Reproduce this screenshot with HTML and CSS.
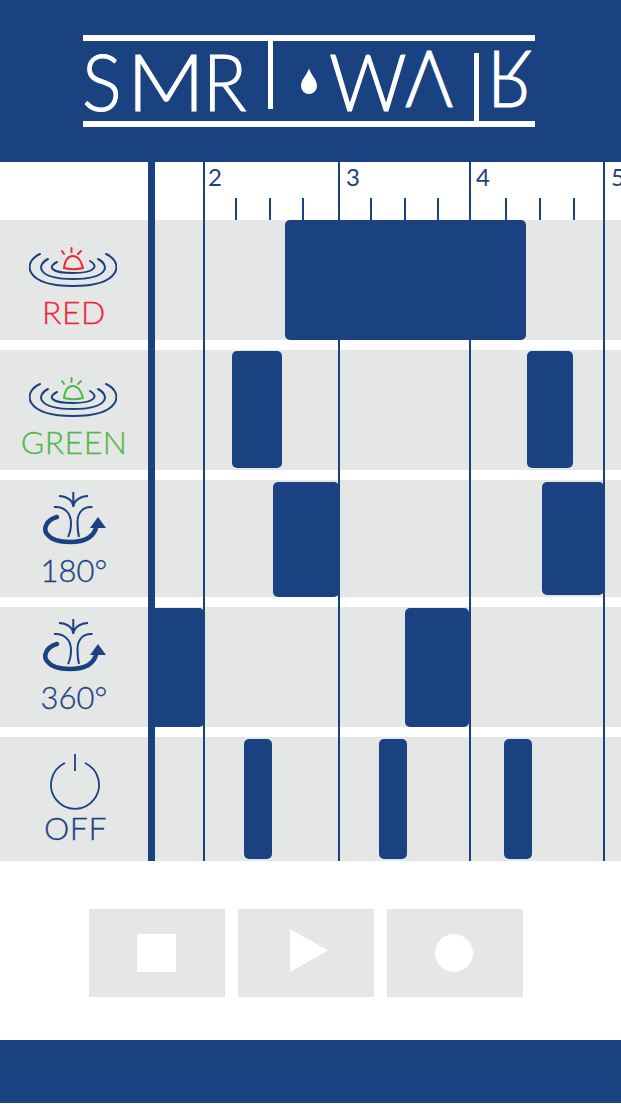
FILE: index.html
```html
<!DOCTYPE html>
<html lang="en">
<head>
  <meta charset="UTF-8" />
  <meta name="viewport" content="width=device-width, initial-scale=1.0"/>
  <title>Smart Water</title>
  <link rel="stylesheet" href="styles.css">
</head>
<body>
  <header class="top-bar">
    <div class="logo">
      <span class="logo-letter letter-s">S</span>
      <span class="logo-letter letter-m">M</span>
      <span class="logo-letter letter-r">R</span>
      <span class="logo-stem stem-top"></span>
      <svg class="logo-drop" viewBox="0 0 16 26"><path d="M8 0C9 6 16 11 16 18A8 8 0 0 1 0 18C0 11 7 6 8 0Z"/></svg>
      <span class="logo-letter letter-w">W</span>
      <span class="logo-letter letter-v">V</span>
      <span class="logo-stem stem-bottom"></span>
      <span class="logo-letter letter-rr">R</span>
    </div>
  </header>

  <main class="chart">
    <div class="ruler">
      <span class="ruler-num" style="left: 208px">2</span>
      <span class="ruler-num" style="left: 346px">3</span>
      <span class="ruler-num" style="left: 476px">4</span>
      <span class="ruler-num" style="left: 611px">5</span>
      <i class="tick" style="left: 235px"></i>
      <i class="tick" style="left: 269px"></i>
      <i class="tick" style="left: 302px"></i>
      <i class="tick" style="left: 370px"></i>
      <i class="tick" style="left: 404px"></i>
      <i class="tick" style="left: 437px"></i>
      <i class="tick" style="left: 505px"></i>
      <i class="tick" style="left: 539px"></i>
      <i class="tick" style="left: 573px"></i>
    </div>

    <div class="lanes">
      <section class="lane lane-red">
        <div class="lane-label">
          <svg class="icon-alarm" viewBox="29 246 88 42">
            <path class="ripple" d="M40 254C22 262 24 286 73 286C122 286 124 262 106 254M48 259C36 265 37 279 73 279C109 279 110 265 98 259M57 262C47 267 51 273 73 273C95 273 99 266 90 261"/>
            <path class="lamp" d="M64 268C65 260 68 256 73 256C78 256 81 260 83 268C77 269.500 70 269.500 64 268ZM71.500 248V252M62 251L64 254M81 251L78 254"/>
          </svg>
          <span class="lane-name">RED</span>
        </div>
        <div class="block" style="left: 285px; width: 241px"></div>
      </section>

      <section class="lane lane-green">
        <div class="lane-label">
          <svg class="icon-alarm" viewBox="29 246 88 42">
            <path class="ripple" d="M40 254C22 262 24 286 73 286C122 286 124 262 106 254M48 259C36 265 37 279 73 279C109 279 110 265 98 259M57 262C47 267 51 273 73 273C95 273 99 266 90 261"/>
            <path class="lamp" d="M64 268C65 260 68 256 73 256C78 256 81 260 83 268C77 269.500 70 269.500 64 268ZM71.500 248V252M62 251L64 254M81 251L78 254"/>
          </svg>
          <span class="lane-name">GREEN</span>
        </div>
        <div class="block" style="left: 232px; width: 50px"></div>
        <div class="block" style="left: 527px; width: 46px"></div>
      </section>

      <section class="lane lane-180">
        <div class="lane-label">
          <svg class="icon-fountain" viewBox="35 485 80 70">
            <path class="spray" d="M73.300 492V507M73.300 507C73 500 66 496 59 496M73.300 507C74 500 81 496 88 496M54 507C64 506 71 513 71 523C71 529 70 533 68 537M92.500 507C84 506 77.500 512 77.500 522C77.500 528 78 533 79 537"/>
            <path class="swirl" d="M57 517C46 520 43 529 47 534C52 541 62 542 70 542C83 542 94 538 96.500 526"/>
            <path class="swirl-head" d="M98 517L106 528H90Z"/>
          </svg>
          <span class="lane-name">180°</span>
        </div>
        <div class="block" style="left: 273px; width: 66px"></div>
        <div class="block block-short" style="left: 542px; width: 62px"></div>
      </section>

      <section class="lane lane-360">
        <div class="lane-label">
          <svg class="icon-fountain" viewBox="35 485 80 70">
            <path class="spray" d="M73.300 492V507M73.300 507C73 500 66 496 59 496M73.300 507C74 500 81 496 88 496M54 507C64 506 71 513 71 523C71 529 70 533 68 537M92.500 507C84 506 77.500 512 77.500 522C77.500 528 78 533 79 537"/>
            <path class="swirl" d="M57 517C46 520 43 529 47 534C52 541 62 542 70 542C83 542 94 538 96.500 526"/>
            <path class="swirl-head" d="M98 517L106 528H90Z"/>
          </svg>
          <span class="lane-name">360°</span>
        </div>
        <div class="block" style="left: 148px; width: 56px"></div>
        <div class="block" style="left: 405px; width: 64px"></div>
      </section>

      <section class="lane lane-off">
        <div class="lane-label">
          <svg class="icon-power" viewBox="0 0 52 58">
            <path d="M15 10A24 24 0 1 0 35 10M25 1V18"/>
          </svg>
          <span class="lane-name">OFF</span>
        </div>
        <div class="block" style="left: 244px; width: 28px"></div>
        <div class="block" style="left: 379px; width: 28px"></div>
        <div class="block" style="left: 504px; width: 28px"></div>
      </section>
    </div>

    <i class="playhead"></i>
    <i class="gridline" style="left: 203px"></i>
    <i class="gridline" style="left: 338px"></i>
    <i class="gridline" style="left: 469px"></i>
    <i class="gridline" style="left: 603px"></i>
  </main>

  <div class="controls">
    <button class="ctrl-btn" type="button" aria-label="Stop"><span class="shape-stop"></span></button>
    <button class="ctrl-btn" type="button" aria-label="Play">
      <svg class="shape-play" viewBox="0 0 38 43"><path d="M0 0L38 21.500L0 43Z"/></svg>
    </button>
    <button class="ctrl-btn" type="button" aria-label="Record"><span class="shape-record"></span></button>
  </div>

  <footer class="bottom-bar"></footer>
</body>
</html>
```

FILE: styles.css
```css
body {
  margin: 0;
  width: 621px;
  height: 1104px;
  overflow: hidden;
  background: white;
  color: #1a4281;
  font-family: Lato, 'Liberation Sans', sans-serif;
}

.top-bar {
  height: 162px;
  background: #1a4281;
  display: flex;
  align-items: center;
  padding-left: 83px;
}

.logo {
  width: 452px;
  height: 80px;
  border-top: 6px solid white;
  border-bottom: 6px solid white;
  display: flex;
  align-items: center;
  color: white;
}

.logo-letter {
  font-size: 78px;
  font-weight: 300;
  line-height: 1;
  display: block;
  transform-origin: left center;
  -webkit-text-stroke: 1.1px white;
}

.letter-s { margin-left: -1px; transform: scaleX(0.95); }
.letter-m { margin-left: 3px; transform: scaleX(1.1); }
.letter-r { margin-left: 5px; transform: scaleX(0.92); }
.letter-w { margin-left: 12px; transform: scaleX(0.98); }
.letter-v { margin-left: -3px; transform: scale(0.94, -1); }
.letter-rr { margin-left: 8px; transform: scale(0.94, -1); }

.logo-stem {
  width: 5px;
  height: 68px;
  background: white;
  flex-shrink: 0;
}

.stem-top {
  align-self: flex-start;
  margin-left: 18px;
}

.stem-bottom {
  align-self: flex-end;
  margin-left: 18px;
}

.logo-drop {
  width: 16px;
  height: 26px;
  fill: white;
  margin-left: 28px;
  flex-shrink: 0;
}

.chart {
  position: relative;
  height: 699px;
}

.ruler {
  position: relative;
  height: 58px;
}

.ruler-num {
  position: absolute;
  top: 0;
  font-size: 24px;
  font-weight: 400;
  line-height: 29px;
}

.tick {
  position: absolute;
  top: 36px;
  width: 2px;
  height: 22px;
  background: #1a4281;
}

.lanes {
  display: grid;
  grid-template-rows: 120px 120px 117px 120px 124px;
  row-gap: 10px;
}

.lane {
  position: relative;
  background: #e5e6e6;
}

.lane-label {
  width: 148px;
  display: flex;
  flex-direction: column;
  align-items: center;
  padding-top: 26px;
}

.lane-name {
  font-size: 32px;
  font-weight: 300;
  line-height: 36px;
  letter-spacing: 0.5px;
  -webkit-text-stroke: 0.3px currentColor;
}

.lane-red .lane-name { color: #ee2737; margin-top: 6px; }
.lane-green .lane-name { color: #4fb848; margin-top: 6px; }

.lane-180 .lane-label,
.lane-360 .lane-label { padding-top: 5px; }

.lane-180 .lane-name,
.lane-360 .lane-name { font-size: 31px; letter-spacing: 0; }

.lane-off .lane-label { padding-top: 16px; }

.lane-off .lane-name {
  margin: -1px 0 0 3px;
}

.icon-alarm {
  width: 88px;
  height: 42px;
  margin-left: -2px;
  fill: none;
}

.ripple {
  fill: none;
  stroke: #1a4281;
  stroke-width: 2;
  stroke-linecap: round;
}

.lamp {
  fill: none;
  stroke-width: 2;
  stroke-linecap: round;
}

.lane-red .lamp { stroke: #ee2737; }
.lane-green .lamp { stroke: #4fb848; }

.icon-fountain {
  width: 80px;
  height: 70px;
  margin: 0 0 -3px 2px;
}

.spray {
  fill: none;
  stroke: #1a4281;
  stroke-width: 2;
}

.swirl {
  fill: none;
  stroke: #1a4281;
  stroke-width: 4.500;
  stroke-linecap: round;
}

.swirl-head {
  fill: #1a4281;
}

.icon-power {
  width: 52px;
  height: 58px;
  margin-left: 3px;
  fill: none;
  stroke: #1a4281;
  stroke-width: 1.800;
}

.block {
  position: absolute;
  top: 0;
  bottom: 0;
  background: #1a4281;
  border-radius: 5px;
}

.lane-green .block { top: 1px; bottom: 2px; }
.lane-180 .block { top: 2px; bottom: 0; }
.lane-180 .block-short { bottom: 2px; }
.lane-360 .block { top: 1px; bottom: 0; }
.lane-off .block { top: 2px; bottom: 2px; }

.playhead {
  position: absolute;
  top: 0;
  bottom: 0;
  left: 148px;
  width: 7px;
  background: #1a4281;
}

.gridline {
  position: absolute;
  top: 0;
  bottom: 0;
  width: 2px;
  background: #1a4281;
}

.controls {
  display: flex;
  gap: 13px;
  padding: 48px 0 43px 89px;
}

.ctrl-btn {
  width: 136px;
  height: 88px;
  padding: 0;
  border: none;
  border-radius: 0;
  background: #e5e6e6;
  display: flex;
  align-items: center;
  justify-content: center;
}

.shape-stop {
  width: 39px;
  height: 38px;
  margin-left: -2px;
  background: white;
}

.shape-play {
  width: 38px;
  height: 43px;
  fill: white;
  margin: -6px 0 0 6px;
}

.shape-record {
  width: 38px;
  height: 38px;
  margin-left: -2px;
  border-radius: 50%;
  background: white;
}

.bottom-bar {
  height: 63px;
  background: #1a4281;
}
```
